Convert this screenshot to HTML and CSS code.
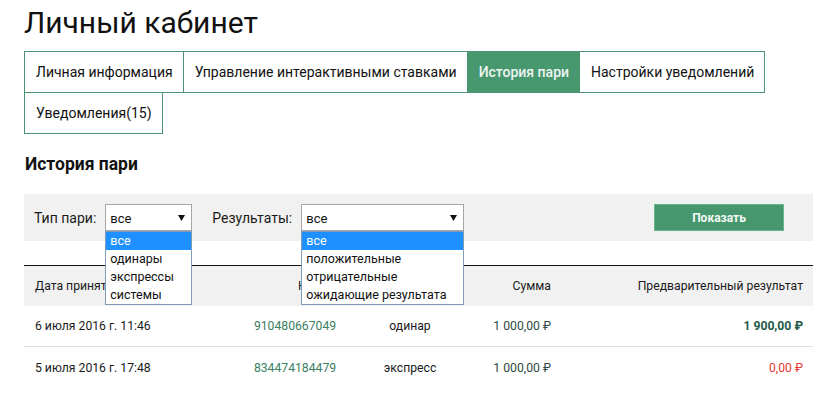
FILE: index.html
```html
<!DOCTYPE html>
<html lang="ru">
<head>
<meta charset="utf-8">
<title>Личный кабинет</title>
<link rel="stylesheet" href="styles.css">
</head>
<body>
<div class="page">
  <h1 class="title">Личный кабинет</h1>
  <nav class="tabs">
    <a class="tab">Личная информация</a>
    <a class="tab">Управление интерактивными ставками</a>
    <a class="tab tab-active">История пари</a>
    <a class="tab">Настройки уведомлений</a>
    <a class="tab">Уведомления(15)</a>
  </nav>

  <h2 class="section-title">История пари</h2>

  <div class="filters">
    <span class="filter-label">Тип пари:</span>
    <div class="select select-type">
      <span class="select-value">все</span>
      <svg class="select-arrow" width="7" height="6" viewBox="0 0 7 6"><polygon points="0,0 7,0 3.5,6" fill="#111"/></svg>
      <ul class="options">
        <li class="option option-selected">все</li>
        <li class="option">одинары</li>
        <li class="option">экспрессы</li>
        <li class="option">системы</li>
      </ul>
    </div>
    <span class="filter-label filter-label-second">Результаты:</span>
    <div class="select select-result">
      <span class="select-value">все</span>
      <svg class="select-arrow" width="7" height="6" viewBox="0 0 7 6"><polygon points="0,0 7,0 3.5,6" fill="#111"/></svg>
      <ul class="options">
        <li class="option option-selected">все</li>
        <li class="option">положительные</li>
        <li class="option">отрицательные</li>
        <li class="option">ожидающие результата</li>
      </ul>
    </div>
    <button class="show-btn">Показать</button>
  </div>

  <div class="bets">
    <div class="bets-row bets-head">
      <div class="cell cell-date">Дата принятия</div>
      <div class="cell cell-num cell-num-head">Номер</div>
      <div class="cell cell-type">Тип</div>
      <div class="cell cell-sum">Сумма</div>
      <div class="cell cell-res">Предварительный результат</div>
    </div>
    <div class="bets-row">
      <div class="cell cell-date">6 июля 2016 г. 11:46</div>
      <div class="cell cell-num"><a class="bet-link">910480667049</a></div>
      <div class="cell cell-type">одинар</div>
      <div class="cell cell-sum money">1 000,00 ₽</div>
      <div class="cell cell-res money win">1 900,00 ₽</div>
    </div>
    <div class="bets-row">
      <div class="cell cell-date">5 июля 2016 г. 17:48</div>
      <div class="cell cell-num"><a class="bet-link">834474184479</a></div>
      <div class="cell cell-type">экспресс</div>
      <div class="cell cell-sum money">1 000,00 ₽</div>
      <div class="cell cell-res money loss">0,00 ₽</div>
    </div>
  </div>
</div>
</body>
</html>
```

FILE: styles.css
```css
* { box-sizing: border-box; }

html, body {
  margin: 0;
  padding: 0;
  background: #fff;
}

body {
  font-family: Roboto, "Liberation Sans", Arial, sans-serif;
  color: #1a1a1a;
  font-size: 13px;
}

.page {
  padding: 5px 2px 0 24px;
}

.title {
  margin: 0;
  font-size: 30px;
  line-height: 36px;
  font-weight: 400;
  color: #111;
}

.tabs {
  display: flex;
  flex-wrap: wrap;
  margin-top: 10px;
}

.tab {
  display: block;
  height: 42px;
  line-height: 40px;
  padding: 0 10px 0 11px;
  border: 1px solid #4b9473;
  margin: 0 -1px -1px 0;
  font-size: 14px;
  color: #111;
  white-space: nowrap;
}

.tab-active {
  background: #47976f;
  color: #eef5f1;
  font-weight: 500;
}

.section-title {
  margin: 20px 0 0 1px;
  font-size: 17.5px;
  line-height: 22px;
  font-weight: 700;
  color: #111;
}

.filters {
  display: flex;
  align-items: center;
  margin-top: 19px;
  height: 47px;
  padding: 0 29px 0 10px;
  background: #f1f1f1;
}

.filter-label {
  font-size: 14px;
  color: #1a1a1a;
  margin-right: 9px;
}

.filter-label-second {
  margin-left: 20px;
}

.select {
  position: relative;
  display: flex;
  align-items: center;
  justify-content: space-between;
  height: 27px;
  padding: 0 6px 0 4px;
  background: #fff;
  border: 1px solid #a6a6a6;
  font-size: 13px;
}

.select-type { width: 87px; }
.select-result { width: 163px; }

.select-value {
  color: #111;
  margin-top: 1px;
}

.select-arrow {
  display: block;
  margin-top: 1px;
}

.options {
  position: absolute;
  left: -1px;
  right: -1px;
  top: 26px;
  margin: 0;
  padding: 0;
  list-style: none;
  background: #fff;
  border: 1px solid #7f9db9;
  z-index: 5;
}

.option {
  height: 18px;
  line-height: 18px;
  padding-left: 4px;
  font-size: 12.5px;
  color: #111;
  white-space: nowrap;
}

.option-selected {
  background: #1e90ff;
  color: #fff;
}

.show-btn {
  margin-left: auto;
  width: 130px;
  height: 27px;
  background: #46966e;
  border: 1px solid #64b88c;
  color: #f4faf6;
  font-family: Roboto, "Liberation Sans", Arial, sans-serif;
  font-size: 12px;
  font-weight: 700;
  padding: 0;
}

.bets {
  margin-top: 24px;
  border-top: 1px solid #111;
  width: 789px;
}

.bets-row {
  display: grid;
  grid-template-columns: 196px 130px 100px 91px 1fr;
  align-items: center;
  height: 41px;
  padding: 0 10px;
  border-bottom: 1px solid #dedede;
  font-size: 12.2px;
}

.bets-row:last-child {
  border-bottom: none;
}

.bets-head {
  background: #f1f1f1;
  height: 40px;
  border-bottom: none;
  color: #1a1a1a;
}

.cell { white-space: nowrap; }
.cell-date { text-align: left; padding-left: 1px; }
.cell-num { text-align: center; }
.cell-num-head { text-align: left; padding-left: 68px; }
.cell-type { text-align: center; }
.cell-sum { text-align: right; }
.cell-res { text-align: right; }

.bet-link {
  color: #3a8063;
  text-decoration: none;
}

.money { color: #2e4a44; }
.bets-head .cell-sum { color: #1a1a1a; }

.win {
  color: #1f5a4c;
  font-weight: 700;
}

.loss {
  color: #e53935;
}
```
